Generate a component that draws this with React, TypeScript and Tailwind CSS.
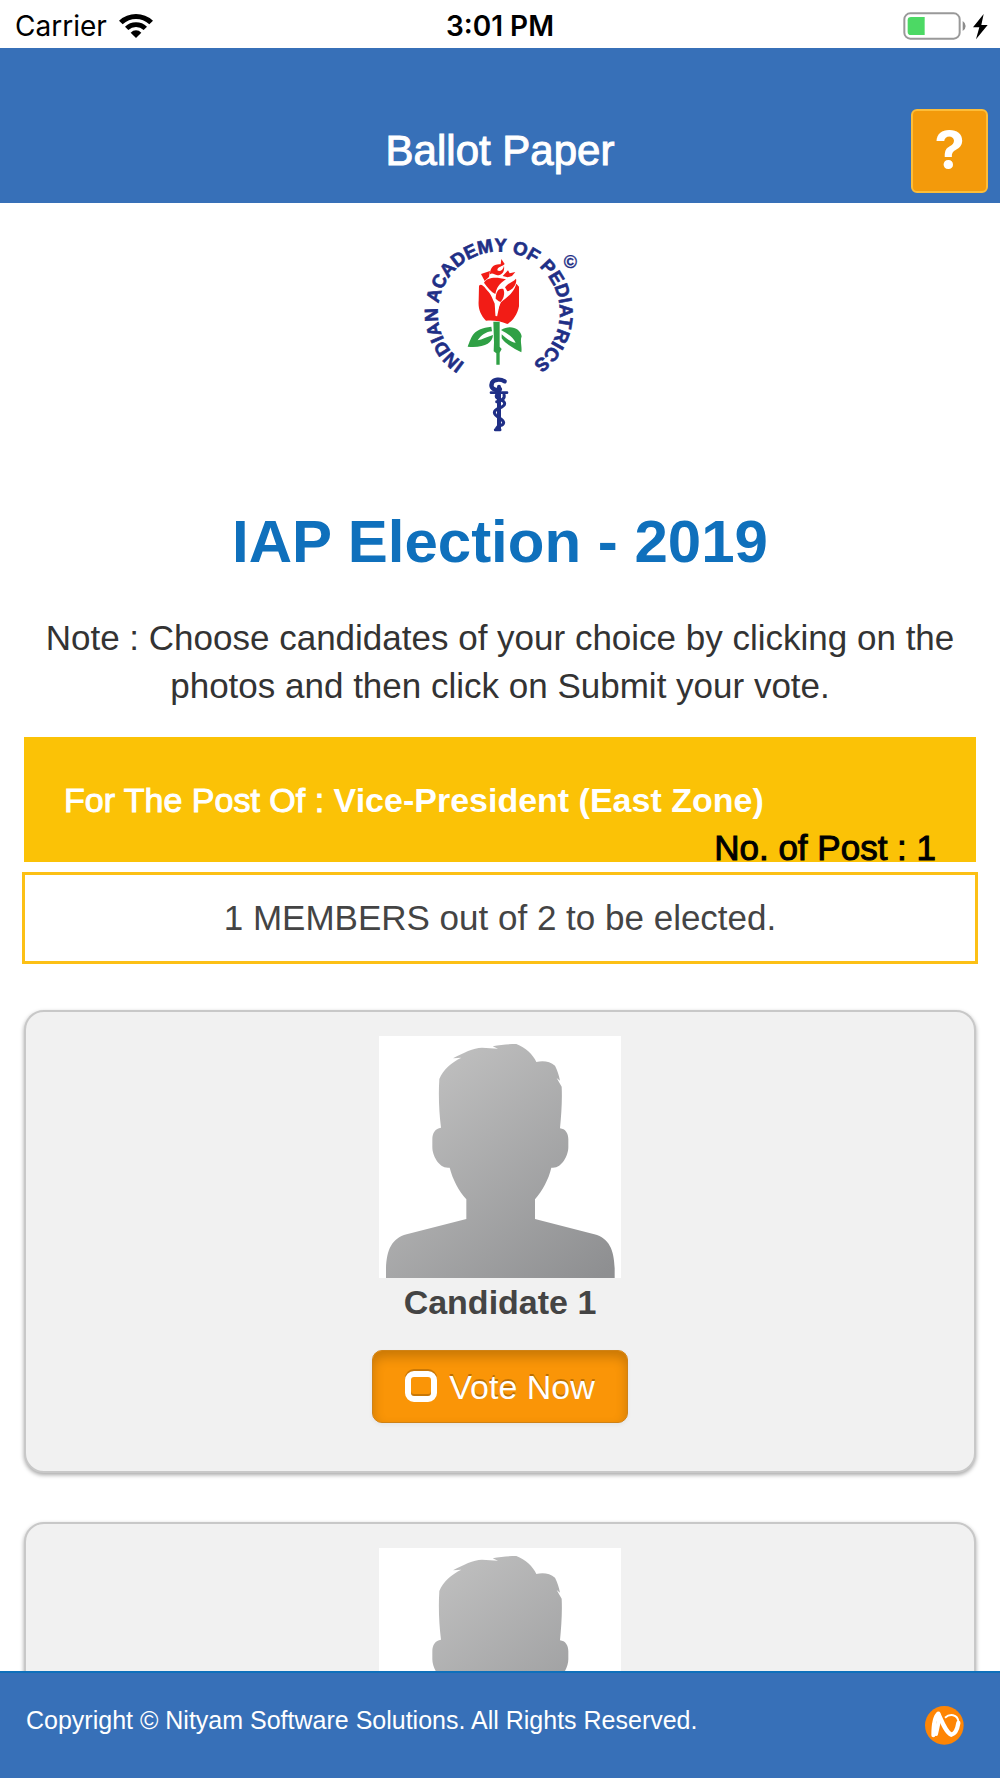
import { useState } from 'react'

interface Candidate {
  id: number
  name: string
}

const candidates: Candidate[] = [
  { id: 1, name: 'Candidate 1' },
  { id: 2, name: 'Candidate 2' },
]

function WifiIcon() {
  return (
    <svg width="34" height="24" viewBox="0 0 102 72" aria-hidden="true">
      <path d="M0 20Q22 0 51 0T102 20L91 31Q73 15 51 15T11 31Z" />
      <path d="M18 38Q32 25 51 25T84 38L74 48Q64 39 51 39T28 48Z" />
      <path d="M35 56Q42 49 51 49T67 56L51 72Z" />
    </svg>
  )
}

function BatteryIcon() {
  return (
    <svg width="86" height="28" viewBox="0 0 258 84" aria-hidden="true">
      <rect x="4" y="4" width="166" height="76" rx="18" fill="#fff" stroke="#999" strokeWidth="6" />
      <path d="M65 15H24Q14 15 14 25V59Q14 69 24 69H65Z" fill="#4cd964" />
      <path d="M179 27Q188 33 188 42T179 57Z" fill="#8c8c8c" />
      <path d="M242 6L210 46H229L219 82L254 39H235Z" fill="#000" />
    </svg>
  )
}

function AcademyLogo() {
  return (
    <svg className="h-[220px] w-[200px]" viewBox="0 0 600 660" role="img" aria-label="Indian Academy of Pediatrics">
      <defs>
        <path id="ring" d="M296 461A183 183 0 1 1 297 461" />
      </defs>
      <g fill="#1f2f86" stroke="#1f2f86" strokeWidth="2" fontFamily="Liberation Sans, Arial, sans-serif" fontWeight="700" textAnchor="middle">
        <text fontSize="56">
          <textPath href="#ring" startOffset="50%">INDIAN ACADEMY OF PEDIATRICS</textPath>
        </text>
        <text x="511" y="143" fontSize="54" strokeWidth="1">©</text>
      </g>

      {/* Rose */}
      <path
        d="M237 197C246 188 254 203 266 216C278 231 280 246 286 252L288 289C293 272 296 260 303 247C321 230 341 220 349 191L357 200V259C352 285 338 303 322 312C302 303 279 300 258 302C241 284 234 265 236 242Z"
        fill="#f21c16"
      />
      <path d="M243 162L270 153L267 171L254 183Z" fill="#f21c16" />
      <path d="M252 188C262 171 288 170 318 178C306 187 292 194 286 222C274 216 262 202 252 188Z" fill="#f21c16" />
      <path d="M270 163C270 143 281 131 302 133L304 117L314 132C309 140 292 139 292 151C298 157 310 151 312 137C315 157 304 166 292 166C283 165 278 157 270 163Z" fill="#f21c16" />
      <path d="M308 168L324 151L329 160L346 156L336 168L323 172Z" fill="#f21c16" />
      <path d="M315 202C325 188 338 187 348 176C352 192 338 211 322 214Z" fill="#f21c16" />
      <path d="M287 236C287 217 295 202 310 207C316 221 310 239 300 247Z" fill="#f21c16" />
      <path d="M286 243L289 288L298 245" fill="none" stroke="#fff" strokeWidth="5" />

      {/* Stem and leaves */}
      <path d="M280 305H299V380L305 387L299 398V434H289V400L281 394L282 367Z" fill="#2fa045" />
      <path d="M203 380C216 348 218 326 274 320L276 334C258 335 243 346 233 361C246 359 262 350 279 345C277 370 253 384 203 380Z" fill="#2fa045" />
      <path d="M303 330C332 312 362 327 365 349C359 365 367 378 364 397C347 389 316 372 305 355V343C322 359 336 367 347 368C339 352 323 341 303 330Z" fill="#2fa045" />

      {/* Snake and staff */}
      <g fill="none" stroke="#1f2f86" strokeLinecap="round">
        <path d="M297 500V627" strokeWidth="12" />
        <path d="M273 518H321" strokeWidth="8" />
        <path d="M314 484C300 476 282 478 276 488C270 504 284 514 300 508" strokeWidth="13" />
        <path d="M290 524C282 540 314 535 314 551C313 566 283 562 283 578C285 594 310 593 311 608C310 620 294 614 290 624" strokeWidth="9" />
        <path d="M312 523C316 536 304 543 290 545M286 629H300" strokeWidth="9" />
      </g>
    </svg>
  )
}

function Portrait({ id }: { id: number }) {
  const fillId = `portrait-${id}`
  return (
    <svg className="size-[242px] bg-white" viewBox="57 48 726 726" aria-hidden="true">
      <defs>
        <linearGradient id={fillId} x1="200" y1="140" x2="720" y2="774" gradientUnits="userSpaceOnUse">
          <stop offset="0" stopColor="#bfbfbf" />
          <stop offset="1" stopColor="#8e8f91" />
        </linearGradient>
      </defs>
      <path
        d="M78 774V745C80 690 95 655 140 643L319 597V538C296 512 278 478 269 443C238 448 217 407 217 382V358C217 338 226 326 243 323C237 275 235 225 238 177C250 148 275 127 304 113L279 115C310 98 340 84 366 83L414 86L398 79C422 74 445 72 469 72C496 82 520 105 529 126C549 121 570 124 585 137C592 151 597 165 600 182L590 174L605 200C607 241 604 283 600 325C616 327 625 339 625 358V382C625 407 604 448 574 443C566 478 547 512 525 538V597L703 643C748 655 762 690 764 745V774Z"
        fill={`url(#${fillId})`}
      />
    </svg>
  )
}

function CandidateCard({ candidate }: { candidate: Candidate }) {
  const [voted, setVoted] = useState(false)

  return (
    <li className="mx-6 flex flex-col items-center rounded-[20px] border-2 border-[#c8c8c8] bg-[#f1f1f1] pt-6 pb-12 shadow-[0_2px_4px_rgba(0,0,0,0.35)]">
      <Portrait id={candidate.id} />
      <h3 className="text-[34px] leading-12 font-bold text-[#444]">{candidate.name}</h3>
      <button
        type="button"
        aria-pressed={voted}
        onClick={() => setVoted(!voted)}
        className="mt-6 flex h-[73px] items-center gap-3 rounded-[10px] border border-[#cf8216] bg-[#fa9507] px-8 text-[34px] leading-12 text-white shadow-[inset_0_6px_12px_rgba(0,0,0,0.2),0_2px_4px_rgba(0,0,0,0.05)] text-shadow-[0_-2px_0_rgba(0,0,0,0.25)]"
      >
        <svg width="32" height="36" viewBox="0 0 32 36" fill="none" aria-hidden="true">
          <rect x="3" y="3" width="26" height="25" rx="6" stroke="#c87706" strokeWidth="6" />
          <rect x="3" y="5" width="26" height="25" rx="6" stroke="#fff" strokeWidth="6" />
          {voted && <path d="M9 17L14 22L23 12" stroke="#fff" strokeWidth="4" />}
        </svg>
        Vote Now
      </button>
    </li>
  )
}

export default function App() {
  return (
    <div className="flex h-screen flex-col bg-white font-['Liberation_Sans',Arial,sans-serif]">
      {/* Status bar */}
      <div className="grid h-12 shrink-0 grid-cols-3 items-center bg-white px-[11px] pt-1 font-['Inter',sans-serif] text-[28px] leading-8 text-black">
        <div className="flex items-center gap-3 pl-1">
          <span>Carrier</span>
          <WifiIcon />
        </div>
        <span className="text-center font-semibold">3:01 PM</span>
        <div className="flex justify-end">
          <BatteryIcon />
        </div>
      </div>

      <header className="grid h-[155px] shrink-0 grid-cols-[1fr_auto_1fr] items-end bg-[#3770b8] px-3 pb-[10px] text-white">
        <h1 className="col-start-2 pb-[18px] text-[42px] leading-12 [-webkit-text-stroke:1px_white]">Ballot Paper</h1>
        <button
          type="button"
          aria-label="Help"
          className="flex h-[84px] w-[77px] items-center justify-center justify-self-end rounded-md border-2 border-[#fdbd38] bg-[#f39a0b] pb-1 font-['Inter',sans-serif] text-[54px] font-bold"
        >
          ?
        </button>
      </header>

      <main className="min-h-0 flex-1 overflow-y-auto [scrollbar-width:none]">
        <div className="flex justify-center pt-[17px]">
          <AcademyLogo />
        </div>
        <h2 className="mt-[70px] text-center text-[60px] leading-16 font-bold text-[#0f70bc]">IAP Election - 2019</h2>
        <p className="mt-10 px-6 text-center text-[35px] leading-12 text-[#333]">
          Note : Choose candidates of your choice by clicking on the photos and then click on Submit your vote.
        </p>

        {/* Post */}
        <section className="mx-6 mt-[27px] bg-[#fbc206] pt-[39px] pr-10 pl-10 text-[34px]">
          <p className="leading-12 text-white">
            <span className="[-webkit-text-stroke:1px_white]">For The Post Of : </span>
            <strong>Vice-President (East Zone)</strong>
          </p>
          <p className="mt-[10px] text-right text-[35px] leading-7 text-black [-webkit-text-stroke:1px_black]">No. of Post : 1</p>
        </section>
        <p className="mx-[22px] mt-[10px] border-3 border-[#fcc015] py-[19px] text-center text-[35px] leading-12 text-[#444]">
          1 MEMBERS out of 2 to be elected.
        </p>

        <ul className="flex flex-col gap-[49px] pt-[46px] pb-12">
          {candidates.map((c) => (
            <CandidateCard key={c.id} candidate={c} />
          ))}
        </ul>
      </main>

      <footer className="flex h-[107px] shrink-0 items-center justify-between border-t-2 border-[#0e70bb] bg-[#3770b8] pr-9 pl-[26px] text-[25px] leading-8 text-white">
        <p className="pb-3">Copyright © Nityam Software Solutions. All Rights Reserved.</p>
        <svg width="39" height="39" viewBox="0 0 117 117" fill="none" aria-hidden="true">
          <circle cx="58" cy="58" r="58" fill="#fe8504" />
          <path d="M25 88C25 64 27 34 39 24C47 28 40 52 33 84" stroke="#fff" strokeWidth="12" strokeLinecap="round" />
          <path d="M40 23C50 45 63 80 79 86C92 83 97 70 100 51" stroke="#fff" strokeWidth="13" strokeLinecap="round" />
          <path d="M60 35C73 24 98 22 101 50" stroke="#fff" strokeWidth="6" />
        </svg>
      </footer>
    </div>
  )
}
